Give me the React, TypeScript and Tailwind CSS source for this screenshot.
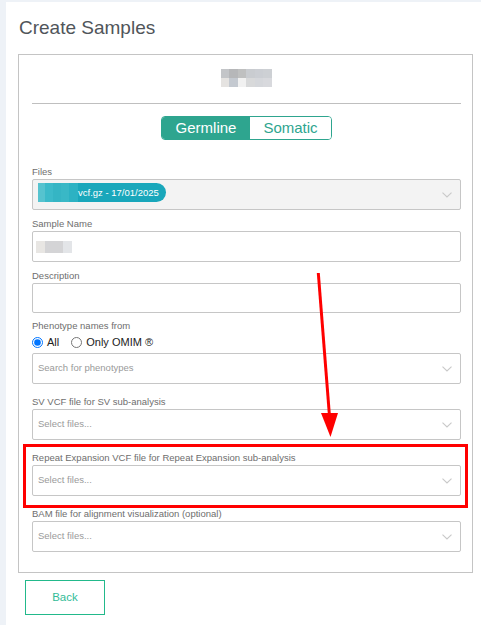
import React from "react";

const FONT = { fontFamily: '"Liberation Sans", Arial, sans-serif' };

function Chevron() {
  return (
    <svg width="10" height="6" viewBox="0 0 10 6" className="shrink-0">
      <path d="M0.5 0.7 L5 5 L9.5 0.7" fill="none" stroke="#c9c9c9" strokeWidth="1.1" />
    </svg>
  );
}

function Label({ children, className = "" }: { children: React.ReactNode; className?: string }) {
  return <div className={`text-[9.5px] leading-[12px] text-[#6e6e6e] mb-[1px] ${className}`}>{children}</div>;
}

function SelectBox({ placeholder }: { placeholder: string }) {
  return (
    <div className="h-[31px] border border-[#c6c6c6] rounded-[2px] flex items-center justify-between pl-[5px] pr-[8px] bg-white">
      <span className="text-[9.5px] text-[#9a9a9a]">{placeholder}</span>
      <Chevron />
    </div>
  );
}

export default function App() {
  return (
    <div className="relative w-[481px] h-[625px] overflow-hidden bg-[#eef2f7]" style={FONT}>
      <div className="ml-[6px] mt-[2px] h-[623px] bg-white pl-[12px] pt-[15px]">
        <h1 className="text-[19px] leading-[22px] text-[#50555a] pl-[1px]">Create Samples</h1>

        <div className="mt-[15px] w-[455px] border border-[#c4c4c4] pl-[13px] pr-[11px] pt-[14px] pb-[20px]">
          {/* blurred logo */}
          <div className="flex justify-center">
            <div className="grid grid-cols-[8px_9px_8px_9px_8px_9px] grid-rows-[9px_9px]">
              <div className="bg-[#c3c5c8]" />
              <div className="bg-[#b6b7b9]" />
              <div className="bg-[#bfc0c0]" />
              <div className="bg-[#c9ccd0]" />
              <div className="bg-[#cbced3]" />
              <div className="bg-[#cdd0d4]" />
              <div className="bg-[#e5e3e1]" />
              <div className="bg-[#c4c9d0]" />
              <div className="bg-[#f1f1f1]" />
              <div className="bg-[#d8d9da]" />
              <div className="bg-[#d5d7db]" />
              <div className="bg-[#d8d9dd]" />
            </div>
          </div>

          <div className="mt-[16px] h-px bg-[#bfbfbf]" />

          <div className="mt-[12px] flex justify-center">
            <div className="flex h-[24px] border border-[#2ea58f] rounded-[4px] overflow-hidden text-[15px]">
              <div className="w-[88px] bg-[#2ea58f] text-white flex items-center justify-center">Germline</div>
              <div className="w-[81px] bg-white text-[#2ea58f] flex items-center justify-center">Somatic</div>
            </div>
          </div>

          {/* Files */}
          <Label className="mt-[26px]">Files</Label>
          <div className="h-[31px] border border-[#c6c6c6] rounded-[2px] flex items-start justify-between pl-[5px] pr-[8px] pt-[3px] bg-[#f3f3f3]">
            <div className="flex h-[19px] rounded-r-full rounded-l-[3px] bg-[#19a7bb] overflow-hidden items-center pr-[7px]">
              <div className="flex h-full">
                <div className="w-[7px] h-full bg-[#56c3cf]" />
                <div className="w-[8px] h-full bg-[#3cbac9]" />
                <div className="w-[8px] h-full bg-[#35b5c4]" />
                <div className="w-[8px] h-full bg-[#39b8c6]" />
                <div className="w-[9px] h-full bg-[#2cb2c3]" />
              </div>
              <span className="text-[9.5px] text-white leading-none">vcf.gz - 17/01/2025</span>
            </div>
            <div className="self-center -mt-[3px]">
              <Chevron />
            </div>
          </div>

          {/* Sample Name */}
          <Label className="mt-[8px]">Sample Name</Label>
          <div className="h-[31px] border border-[#c6c6c6] rounded-[2px] flex items-center pl-[3px] bg-white">
            <div className="flex h-[12px]">
              <div className="w-[9px] bg-[#e8e6e3]" />
              <div className="w-[18px] bg-[#d4d4d6]" />
              <div className="w-[9px] bg-[#e3e5e8]" />
            </div>
          </div>

          {/* Description */}
          <Label className="mt-[8px]">Description</Label>
          <div className="h-[30px] border border-[#c6c6c6] rounded-[2px] bg-white" />

          {/* Phenotype */}
          <Label className="mt-[7px]">Phenotype names from</Label>
          <div className="h-[18px] mb-[2px] flex items-center text-[11px] text-[#222]">
            <input type="radio" name="ph" defaultChecked className="w-[11px] h-[11px] m-0" />
            <span className="ml-[4px]">All</span>
            <input type="radio" name="ph" className="w-[11px] h-[11px] m-0 ml-[12px]" />
            <span className="ml-[4px]">Only OMIM ®</span>
          </div>
          <SelectBox placeholder="Search for phenotypes" />

          <Label className="mt-[12px]">SV VCF file for SV sub-analysis</Label>
          <SelectBox placeholder="Select files..." />

          <Label className="mt-[12px]">Repeat Expansion VCF file for Repeat Expansion sub-analysis</Label>
          <SelectBox placeholder="Select files..." />

          <Label className="mt-[12px]">BAM file for alignment visualization (optional)</Label>
          <SelectBox placeholder="Select files..." />
        </div>

        <button className="mt-[7px] ml-[7px] w-[80px] h-[35px] border border-[#22b98b] bg-white text-[11.5px] text-[#33bc97]">
          Back
        </button>
      </div>

      {/* annotation overlay */}
      <div className="absolute left-[23px] top-[444px] w-[445px] h-[64px] border-[3px] border-[#ff0000]" />
      <svg className="absolute left-0 top-0" width="481" height="625" viewBox="0 0 481 625">
        <line x1="318.3" y1="273" x2="329.4" y2="415" stroke="#ff0000" strokeWidth="3" />
        <polygon points="321,413 338,413 330.5,437" fill="#ff0000" />
      </svg>
    </div>
  );
}
